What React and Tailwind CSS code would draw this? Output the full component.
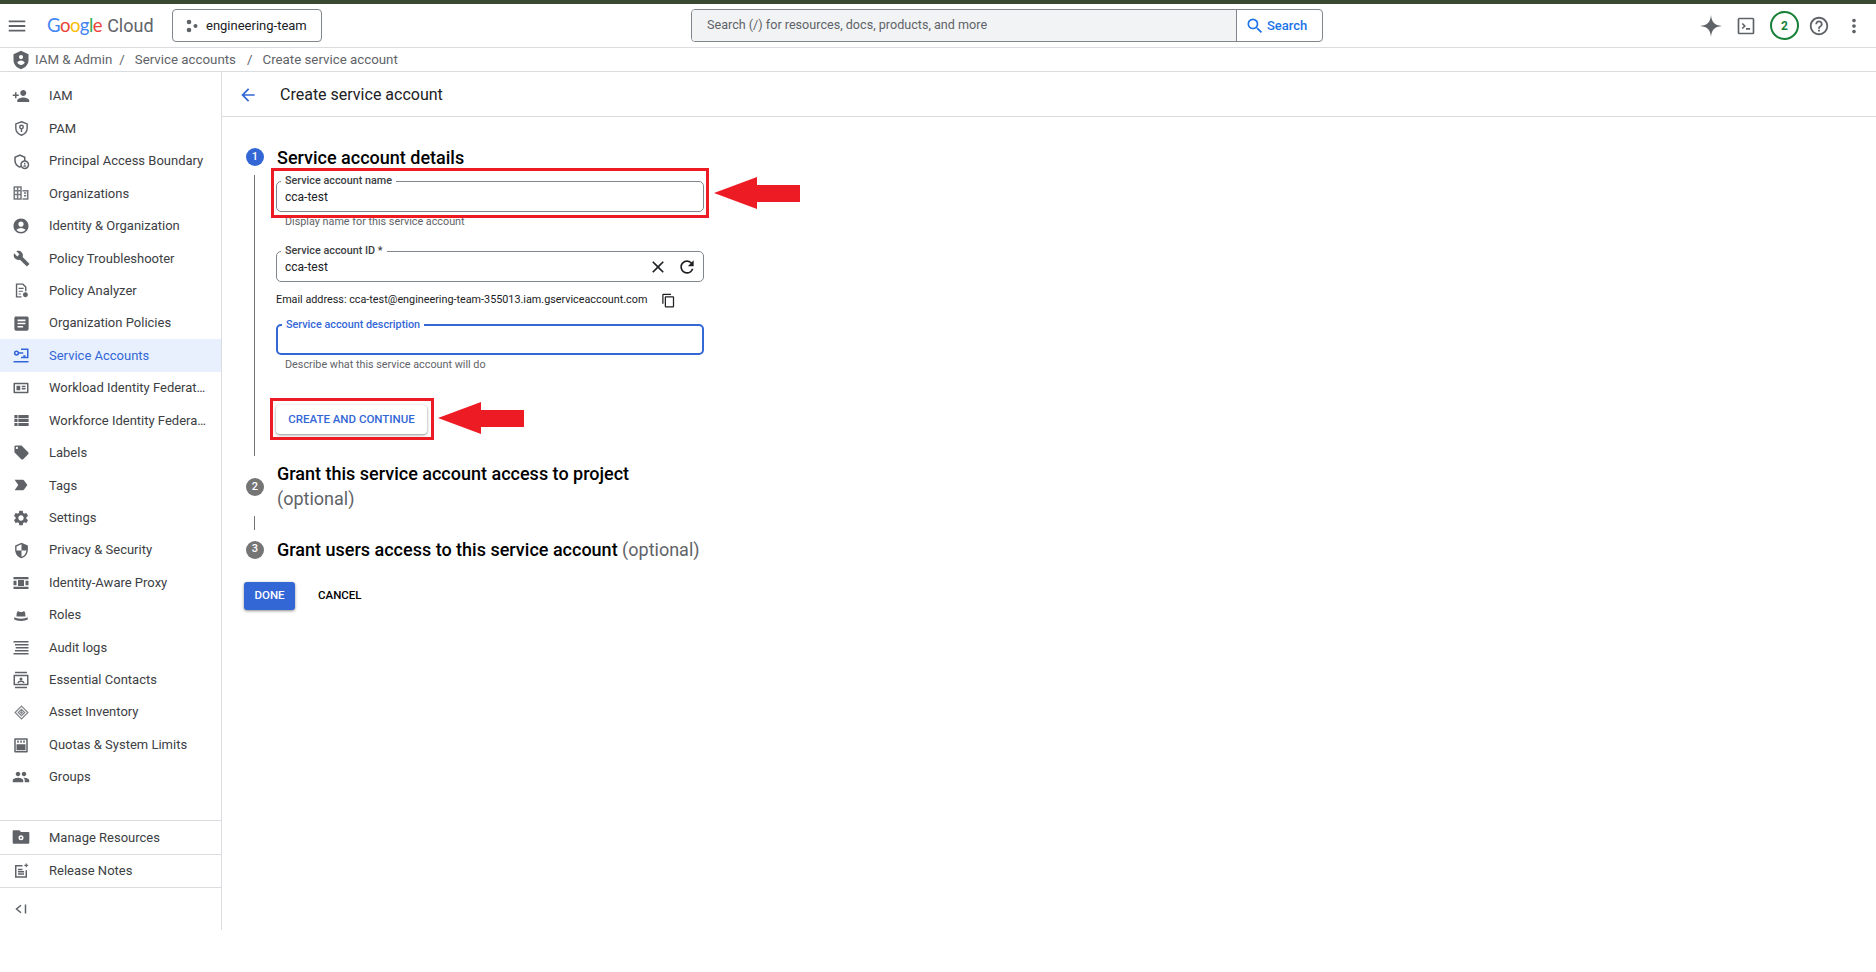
import React from "react";
import {
  MdPersonAdd,
  MdOutlineAdminPanelSettings,
  MdAccountCircle,
  MdBuild,
  MdArticle,
  MdViewList,
  MdLocalOffer,
  MdLabelImportant,
  MdSettings,
  MdSecurity,
  MdPeople,
  MdMenu,
  MdArrowBack,
  MdSearch,
  MdClose,
  MdRefresh,
  MdOutlineContentCopy,
  MdHelpOutline,
  MdMoreVert,
} from "react-icons/md";

const font = { fontFamily: "Roboto, sans-serif" };

// Small custom icons for the ones the packs don't have
const PamIcon = () => (
  <svg viewBox="0 0 24 24" className="w-[17px] h-[17px]" fill="none" stroke="currentColor" strokeWidth="2">
    <path d="M12 2.500l8 3v6c0 4.500-3.200 8-8 10-4.800-2-8-5.500-8-10v-6z" />
    <circle cx="12" cy="10" r="2.500" />
    <path d="M12 12.500v4.500" />
  </svg>
);
const OrgIcon = () => (
  <svg viewBox="0 0 24 24" className="w-[18px] h-[18px]" fill="currentColor" opacity="0.85">
    <path fillRule="evenodd" d="M2 3h11v18H2zM4 5v3h2.500V5zm4.500 0v3H11V5zM4 10v3h2.500v-3zm4.500 0v3H11v-3zM4 15v4h2.500v-4zm4.500 0v4H11v-4z" />
    <path fillRule="evenodd" d="M14 8h8v13h-8v-2h6v-9h-6zm2 3h3v2h-3zm0 3.500h3v2h-3z" />
  </svg>
);
const AnalyzerIcon = () => (
  <svg viewBox="0 0 24 24" className="w-[17px] h-[17px]" fill="none" stroke="currentColor" strokeWidth="2">
    <path d="M12 21H5V3h9l4 4v6" />
    <path d="M8 9h7M8 13h6M8 17h3" strokeWidth="1.500" />
    <circle cx="17.500" cy="18" r="3.500" fill="currentColor" stroke="none" />
  </svg>
);
const ServiceAccountIcon = () => (
  <svg viewBox="0 0 24 24" className="w-[18px] h-[18px]" fill="none" stroke="currentColor" strokeWidth="2">
    <circle cx="6" cy="8" r="2.500" />
    <path d="M9 8h6M12 3h9v11H12M15 12h3M2 19.500h20" />
  </svg>
);
const WorkloadIcon = () => (
  <svg viewBox="0 0 24 24" className="w-[18px] h-[18px]" fill="currentColor">
    <path fillRule="evenodd" d="M3 5h18a1 1 0 011 1v12a1 1 0 01-1 1H3a1 1 0 01-1-1V6a1 1 0 011-1zm1 2v10h16V7zm2 2h5v6H6zm7 0h5v2h-5zm0 3h5v2h-5z" />
  </svg>
);
const ProxyIcon = () => (
  <svg viewBox="0 0 24 24" className="w-[18px] h-[18px]" fill="currentColor">
    <path d="M2 4h20v3H2zM2 17h20v3H2zM2 9h4v6H2zM18 9h4v6h-4zM8 8h8v8H8z" />
  </svg>
);
const RolesIcon = () => (
  <svg viewBox="0 0 24 24" className="w-[18px] h-[18px]" fill="currentColor">
    <path d="M6 14c0-3 .5-7 2-7 1 0 2 1 4 1s3-1 4-1c1.500 0 2 4 2 7zM3 15c2 1 5 2 9 2s7-1 9-2v3c-2 1-5 2-9 2s-7-1-9-2z" />
  </svg>
);
const AuditIcon = () => (
  <svg viewBox="0 0 24 24" className="w-[18px] h-[18px]" fill="currentColor">
    <path d="M2 4h20v2H2zM4 8h18v2H4zM5 12h17v2H5zM4 16h18v2H4zM2 20h20v2H2z" />
  </svg>
);
const ContactsIcon = () => (
  <svg viewBox="0 0 24 24" className="w-[18px] h-[18px]" fill="none" stroke="currentColor" strokeWidth="2">
    <path d="M4 2h16M4 22h16" />
    <rect x="3" y="6" width="18" height="12" />
    <circle cx="12" cy="10.500" r="2" fill="currentColor" stroke="none" />
    <path d="M8 16c.5-1.500 2-2.500 4-2.500s3.500 1 4 2.500" />
  </svg>
);
const AssetIcon = () => (
  <svg viewBox="0 0 24 24" className="w-[17px] h-[17px]" fill="none" stroke="currentColor" strokeWidth="1.700" opacity="0.8">
    <path d="M12 3l9 9-9 9-9-9zM12 7.500l4.500 4.500-4.500 4.500L7.500 12z" />
    <circle cx="12" cy="12" r="1" fill="currentColor" />
  </svg>
);
const QuotaIcon = () => (
  <svg viewBox="0 0 24 24" className="w-[18px] h-[18px]" fill="currentColor">
    <path fillRule="evenodd" d="M4 3h16a1 1 0 011 1v17a1 1 0 01-1 1H4a1 1 0 01-1-1V4a1 1 0 011-1zm1 2v15h14V5zm1 6h12v8H6zm1-5h2v3H7zm4 0h2v3h-2zm4 0h2v3h-2z" />
  </svg>
);
const FolderGearIcon = () => (
  <svg viewBox="0 0 24 24" className="w-[20px] h-[20px]" fill="currentColor">
    <path fillRule="evenodd" d="M3 4h7l2 2h9a1 1 0 011 1v12a1 1 0 01-1 1H3a1 1 0 01-1-1V5a1 1 0 011-1zm9 6a3 3 0 100 6 3 3 0 000-6z" />
    <circle cx="12" cy="13" r="1.200" />
  </svg>
);
const NotesIcon = () => (
  <svg viewBox="0 0 24 24" className="w-[18px] h-[18px]" fill="none" stroke="currentColor" strokeWidth="2">
    <path d="M14 5H5v15h14v-9M8 10h6M8 13h8M8 16h8" />
    <path d="M19 2v5M16.500 4.500h5" strokeWidth="1.500" />
  </svg>
);
const CollapseIcon = () => (
  <svg viewBox="0 0 24 24" className="w-[18px] h-[18px]" fill="none" stroke="currentColor" strokeWidth="2">
    <path d="M12 7l-6 5 6 5M18 6v12" />
  </svg>
);

const navItems = [
  { label: "IAM", icon: <MdPersonAdd size={18} /> },
  { label: "PAM", icon: <PamIcon /> },
  { label: "Principal Access Boundary", icon: <MdOutlineAdminPanelSettings size={18} /> },
  { label: "Organizations", icon: <OrgIcon /> },
  { label: "Identity & Organization", icon: <MdAccountCircle size={18} /> },
  { label: "Policy Troubleshooter", icon: <MdBuild size={17} /> },
  { label: "Policy Analyzer", icon: <AnalyzerIcon /> },
  { label: "Organization Policies", icon: <MdArticle size={19} /> },
  { label: "Service Accounts", icon: <ServiceAccountIcon />, active: true },
  { label: "Workload Identity Federation", icon: <WorkloadIcon /> },
  { label: "Workforce Identity Federation", icon: <MdViewList size={19} /> },
  { label: "Labels", icon: <MdLocalOffer size={17} /> },
  { label: "Tags", icon: <MdLabelImportant size={18} /> },
  { label: "Settings", icon: <MdSettings size={18} /> },
  { label: "Privacy & Security", icon: <MdSecurity size={17} /> },
  { label: "Identity-Aware Proxy", icon: <ProxyIcon /> },
  { label: "Roles", icon: <RolesIcon /> },
  { label: "Audit logs", icon: <AuditIcon /> },
  { label: "Essential Contacts", icon: <ContactsIcon /> },
  { label: "Asset Inventory", icon: <AssetIcon /> },
  { label: "Quotas & System Limits", icon: <QuotaIcon /> },
  { label: "Groups", icon: <MdPeople size={18} /> },
];

function NavRow({ item }) {
  return (
    <div
      className={
        item.active
          ? "flex items-center h-[32.43px] bg-[#e8f0fe] text-[#3367d6]"
          : "flex items-center h-[32.43px] text-[#3c4043]"
      }
    >
      <span className={item.active ? "w-[49px] flex justify-center pr-[7px] text-[#3367d6]" : "w-[49px] flex justify-center pr-[7px] text-[#5f6368]"}>
        {item.icon}
      </span>
      <span className="text-[13px] truncate w-[158px]">{item.label}</span>
    </div>
  );
}

function Sidebar() {
  return (
    <aside className="w-[222px] h-[858px] shrink-0 border-r border-[#dadce0] flex flex-col">
      <div className="flex-1 pt-[8px]">
        {navItems.map((item) => (
          <NavRow key={item.label} item={item} />
        ))}
      </div>
      <div className="border-t border-[#dadce0]">
        <NavRow item={{ label: "Manage Resources", icon: <FolderGearIcon /> }} />
      </div>
      <div className="border-t border-[#dadce0]">
        <NavRow item={{ label: "Release Notes", icon: <NotesIcon /> }} />
      </div>
      <div className="border-t border-[#dadce0] h-[43px] flex items-center pl-[12px] text-[#5f6368]">
        <CollapseIcon />
      </div>
    </aside>
  );
}

function Header() {
  return (
    <header className="h-[44px] border-b border-[#dadce0] flex items-center">
      <MdMenu size={22} className="ml-[6px] text-[#5f6368]" />
      <div className="ml-[19px] w-[125px] flex items-baseline leading-none">
        <span className="text-[18.5px] tracking-[-0.5px]" style={{ fontFamily: "Lato, sans-serif" }}>
          <span className="text-[#4285f4]">G</span>
          <span className="text-[#ea4335]">o</span>
          <span className="text-[#fbbc04]">o</span>
          <span className="text-[#4285f4]">g</span>
          <span className="text-[#34a853]">l</span>
          <span className="text-[#ea4335]">e</span>
        </span>
        <span className="text-[#5f6368] ml-[5px] text-[18px]">Cloud</span>
      </div>
      <button className="w-[150px] h-[33px] border border-[#80868b] rounded-[4px] flex items-center text-[13px] text-[#202124]">
        <svg viewBox="0 0 14 14" className="w-[14px] h-[14px] ml-[12px] mr-[7px] text-[#5f6368]" fill="currentColor">
          <circle cx="4" cy="3" r="2.300" />
          <circle cx="4" cy="11" r="2.300" />
          <circle cx="10.500" cy="7" r="2" />
        </svg>
        engineering-team
      </button>
      <div className="ml-[369px] w-[632px] h-[33px] border border-[#80868b] rounded-[4px] flex overflow-hidden">
        <div className="w-[545px] bg-[#f1f3f4] border-r border-[#80868b] flex items-center pl-[15px] text-[12.6px] text-[#5f6368]">
          Search (/) for resources, docs, products, and more
        </div>
        <div className="flex-1 flex items-center pl-[8px] text-[13px] font-medium text-[#1a73e8]">
          <MdSearch size={20} className="mr-[2px]" />
          Search
        </div>
      </div>
      <div className="ml-auto mr-[11px] flex items-center text-[#5f6368]">
        <svg viewBox="0 0 24 24" className="w-[24px] h-[24px] mr-[13px]" fill="currentColor">
          <path d="M12 1C12.700 8 15 11.300 23 12 15 12.700 12.700 16 12 23 11.300 16 9 12.700 1 12 9 11.300 11.300 8 12 1z" />
        </svg>
        <svg viewBox="0 0 24 24" className="w-[20px] h-[20px] mr-[14px]" fill="none" stroke="currentColor" strokeWidth="2">
          <rect x="3" y="3" width="18" height="18" rx="1" />
          <path d="M7.500 9l3 3-3 3M12 15.500h5" />
        </svg>
        <div className="w-[29px] h-[29px] rounded-full border-2 border-[#188038] flex items-center justify-center text-[12px] font-bold text-[#188038] mr-[9px]">
          2
        </div>
        <MdHelpOutline size={22} className="mr-[13px]" />
        <MdMoreVert size={22} />
      </div>
    </header>
  );
}

function Breadcrumb() {
  return (
    <div className="h-[24px] border-b border-[#dadce0] flex items-center text-[13.3px] text-[#5f6368]">
      <svg viewBox="0 0 24 24" className="w-[20px] h-[20px] ml-[11px] mr-[4px]" fill="currentColor">
        <path fillRule="evenodd" d="M12 1l9 4v7c0 5.500-3.800 9.500-9 11-5.200-1.500-9-5.500-9-11V5zm0 5a2.500 2.500 0 100 5 2.500 2.500 0 000-5zm-4.500 9c1 2 2.700 3 4.500 3s3.500-1 4.500-3c-1-1.500-3-2.500-4.500-2.500S8.500 13.500 7.500 15z" />
      </svg>
      <span>IAM &amp; Admin</span>
      <span className="ml-[7px] mr-[10px]">/</span>
      <span>Service accounts</span>
      <span className="ml-[11px] mr-[10px]">/</span>
      <span>Create service account</span>
    </div>
  );
}

function Field({ label, labelClass, boxClass, value, children }) {
  return (
    <div className={"relative h-[31px] rounded-[5px] flex items-center pl-[8px] " + boxClass}>
      <span className={"absolute left-[4px] top-[-8px] bg-white px-[4px] text-[10.8px] leading-[14px] font-medium " + labelClass}>
        {label}
      </span>
      <span className="text-[12px] text-[#202124]">{value}</span>
      {children}
    </div>
  );
}

function Helper({ children }) {
  return <div className="pl-[9px] text-[10.8px] leading-[14px] mt-[3px] text-[#5f6368]">{children}</div>;
}

function StepCircle({ n, active, className = "" }) {
  return (
    <div
      className={
        (active
          ? "w-[18px] h-[18px] rounded-full bg-[#3367d6] text-white text-[11px] font-medium flex items-center justify-center shrink-0 "
          : "w-[18px] h-[18px] rounded-full bg-[#757575] text-white text-[11px] font-medium flex items-center justify-center shrink-0 ") + className
      }
    >
      {n}
    </div>
  );
}

function RedArrow({ className }) {
  return (
    <svg viewBox="0 0 86 32" className={"absolute w-[86px] h-[32px] " + className}>
      <polygon points="0,16 43,0 43,8 86,8 86,25 43,25 43,32" fill="#ed1c24" />
    </svg>
  );
}

function Stepper() {
  return (
    <div className="pl-[24px] pt-[29px]">
      {/* Step 1 */}
      <div className="flex items-center h-[22px]">
        <StepCircle n="1" active />
        <h2 className="ml-[13px] text-[18px] font-medium text-[#000]">Service account details</h2>
      </div>
      <div className="flex h-[288px]">
        <div className="w-[18px] flex justify-center pt-[7px] pr-[1px]">
          <div className="w-px bg-[#757575]" />
        </div>
        <div className="ml-[12px] w-[428px] pt-[13px]">
          <div className="relative">
            <Field label="Service account name" labelClass="text-[#3c4043]" boxClass="border border-[#80868b]" value="cca-test" />
            <div className="absolute left-[-5px] right-[-5px] top-[-13px] bottom-[-6px] border-[3px] border-[#ed1c24]" />
            <RedArrow className="left-[438px] top-[-4px]" />
          </div>
          <Helper>Display name for this service account</Helper>
          <div className="mt-[22px]">
            <Field label="Service account ID *" labelClass="text-[#3c4043]" boxClass="border border-[#80868b]" value="cca-test">
              <MdClose size={20} className="ml-auto text-[#202124]" />
              <MdRefresh size={20} className="ml-[9px] mr-[6px] text-[#202124]" />
            </Field>
          </div>
          <div className="mt-[11px] h-[14px] flex items-center text-[10.8px] text-[#202124] whitespace-nowrap">
            <span>Email address: cca-test@engineering-team-355013.iam.gserviceaccount.com</span>
            <MdOutlineContentCopy size={15} className="ml-[14px] shrink-0" />
          </div>
          <div className="mt-[17px]">
            <Field label="Service account description" labelClass="text-[#3367d6]" boxClass="border-2 border-[#3367d6]" value="" />
          </div>
          <Helper>Describe what this service account will do</Helper>
          <div className="relative mt-[33px] w-[151px]">
            <button className="w-[151px] h-[29px] rounded-[4px] bg-white text-[11.5px] font-medium text-[#3367d6] shadow-[0_1px_3px_rgba(0,0,0,0.45)]">
              CREATE AND CONTINUE
            </button>
            <div className="absolute left-[-6px] right-[-7px] top-[-7px] bottom-[-6px] border-[3px] border-[#ed1c24]" />
            <RedArrow className="left-[162px] top-[-3px]" />
          </div>
        </div>
      </div>

      {/* Step 2 */}
      <div className="flex items-center mt-[5px]">
        <StepCircle n="2" className="mt-[2px]" />
        <h2 className="ml-[13px] text-[18px] leading-[25px] font-medium text-[#000]">
          Grant this service account access to project
          <br />
          <span className="font-normal text-[#5f6368]">(optional)</span>
        </h2>
      </div>
      <div className="w-[18px] h-[14px] flex justify-center mt-[5px] pr-[1px]">
        <div className="w-px bg-[#757575]" />
      </div>

      {/* Step 3 */}
      <div className="flex items-center mt-[7px]">
        <StepCircle n="3" />
        <h2 className="ml-[13px] text-[18px] leading-[25px] font-medium text-[#000]">
          Grant users access to this service account <span className="font-normal text-[#5f6368]">(optional)</span>
        </h2>
      </div>

      {/* Actions */}
      <div className="flex items-center mt-[20px] text-[11.5px] font-medium">
        <button className="w-[51px] h-[28px] rounded-[3px] bg-[#3367d6] text-white shadow-[0_1px_3px_rgba(0,0,0,0.45)] ml-[-2px]">DONE</button>
        <button className="ml-[23px] text-[#000]">CANCEL</button>
      </div>
    </div>
  );
}

export default function App() {
  return (
    <div className="w-[1876px] h-[972px] overflow-hidden bg-white" style={font}>
      <div className="h-[4px] bg-[#3a4a32]" />
      <Header />
      <Breadcrumb />
      <div className="flex">
        <Sidebar />
        <main className="flex-1">
          <div className="h-[45px] border-b border-[#dadce0] flex items-center pl-[16px] pt-[2px]">
            <MdArrowBack size={20} className="text-[#3367d6]" />
            <h1 className="ml-[22px] text-[16px] text-[#202124]">Create service account</h1>
          </div>
          <Stepper />
        </main>
      </div>
    </div>
  );
}
